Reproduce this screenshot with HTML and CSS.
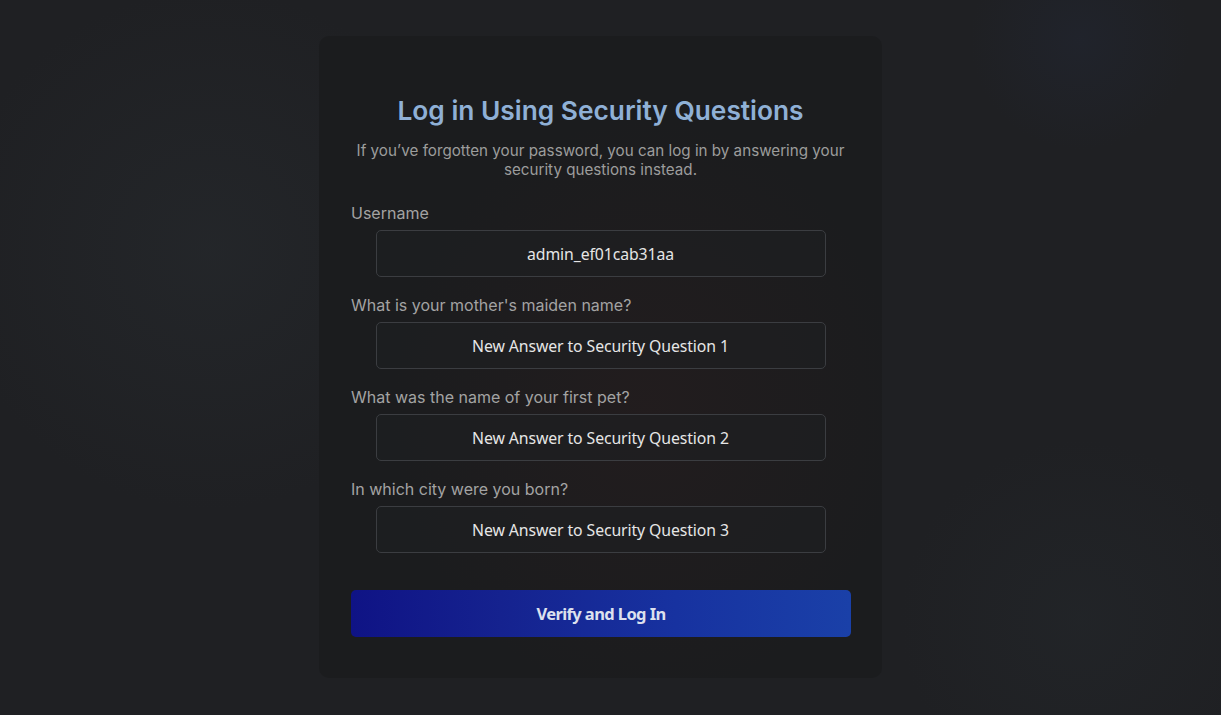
FILE: index.html
```html
<!DOCTYPE html>
<html lang="en">
<head>
<meta charset="utf-8">
<title>Log in Using Security Questions</title>
<link rel="stylesheet" href="styles.css">
</head>
<body>
<main class="page">
  <form class="card">
    <h1 class="title">Log in Using Security Questions</h1>
    <p class="subtitle">If you’ve forgotten your password, you can log in by answering your security questions instead.</p>
    <div class="field">
      <label class="label">Username</label>
      <div class="input">admin_ef01cab31aa</div>
    </div>
    <div class="field">
      <label class="label">What is your mother's maiden name?</label>
      <div class="input">New Answer to Security Question 1</div>
    </div>
    <div class="field">
      <label class="label">What was the name of your first pet?</label>
      <div class="input">New Answer to Security Question 2</div>
    </div>
    <div class="field">
      <label class="label">In which city were you born?</label>
      <div class="input">New Answer to Security Question 3</div>
    </div>
    <button class="submit" type="button">Verify and Log In</button>
  </form>
</main>
</body>
</html>
```
FILE: styles.css
```css
* { box-sizing: border-box; }
html, body { margin: 0; height: 100%; }
body {
  background:
    radial-gradient(circle at 210px 250px, rgba(40,44,48,0.5), rgba(0,0,0,0) 260px),
    radial-gradient(circle at 1080px 40px, rgba(34,40,56,0.4), rgba(0,0,0,0) 110px),
    radial-gradient(circle at 1080px 620px, rgba(36,40,44,0.5), rgba(0,0,0,0) 180px),
    #1f2023;
  font-family: Inter, "Liberation Sans", sans-serif;
  overflow: hidden;
}
.page {
  display: flex;
  justify-content: center;
  padding-top: 36px;
  padding-right: 20px;
}
.card {
  width: 563px;
  height: 642px;
  border-radius: 10px;
  background:
    radial-gradient(ellipse at 58% 58%, rgba(50,30,30,0.3), rgba(0,0,0,0) 55%),
    #1b1c1e;
  padding: 58px 32px 32px;
  display: flex;
  flex-direction: column;
}
.title {
  margin: 0;
  text-align: center;
  font-size: 26.3px;
  font-weight: 600;
  color: #8fb0d6;
  line-height: 34px;
}
.subtitle {
  margin: 13px 0 0;
  text-align: center;
  font-size: 15.2px;
  line-height: 19px;
  color: #9c9c9c;
}
.field {
  display: flex;
  flex-direction: column;
  margin-top: 23px;
}
.field + .field { margin-top: 17px; }
.label {
  font-size: 16px;
  line-height: 22px;
  color: #a3a3a3;
  margin-bottom: 6px;
}
.input {
  align-self: center;
  width: 450px;
  height: 47px;
  border: 1px solid #3b3d41;
  border-radius: 5px;
  background: rgba(30,32,34,0.6);
  display: flex;
  align-items: center;
  justify-content: center;
  font-family: "Noto Sans", "Open Sans", sans-serif;
  font-size: 15.8px;
  letter-spacing: -0.1px;
  color: #e6e6e6;
}
.submit {
  margin-top: 37px;
  width: 500px;
  height: 47px;
  border: 0;
  border-radius: 5px;
  background: linear-gradient(90deg, #0f1385 0%, #15228f 30%, #1732a0 65%, #1a40a8 100%);
  color: #dde1ee;
  font-family: "Noto Sans", "Open Sans", sans-serif;
  font-weight: 700;
  font-size: 16.5px;
  letter-spacing: -0.6px;
}
```
